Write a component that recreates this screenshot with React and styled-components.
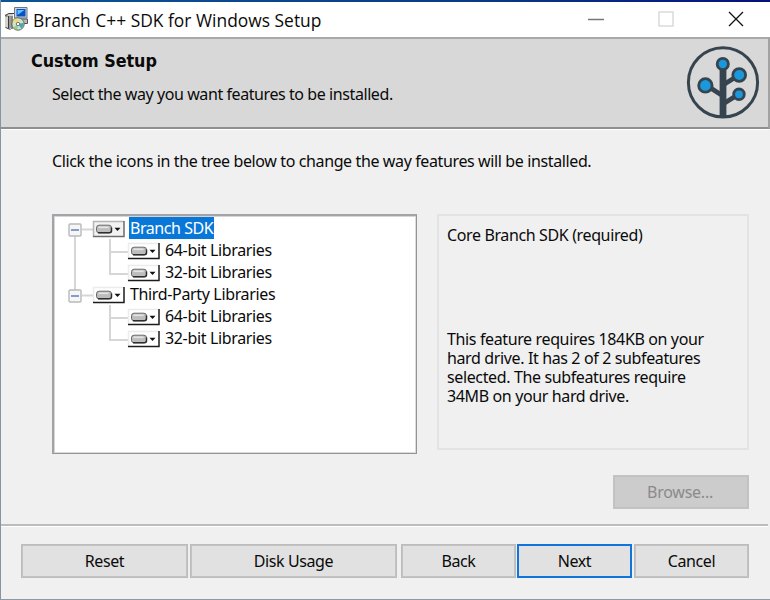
import React from 'react';
import styled, { createGlobalStyle } from 'styled-components';

const Global = createGlobalStyle`
  * { box-sizing: border-box; }
  body { margin: 0; background: #f0f0f0; }
`;

const Window = styled.div`
  width: 770px;
  height: 600px;
  display: flex;
  flex-direction: column;
  background: #f0f0f0;
  border-left: 1px solid #8795a1;
  border-bottom: 1px solid #8c9aa5;
  font: 16px/19px 'Noto Sans', 'Open Sans', sans-serif;
  letter-spacing: -0.4px;
  color: #0a0a0a;
  overflow: hidden;
  white-space: nowrap;
`;

const TitleBar = styled.header`
  height: 37px;
  flex: none;
  display: flex;
  align-items: center;
  padding-left: 3px;
  background: linear-gradient(90deg, #0b5597, #0a3b86 60%, #04107c) 0 0 / 100% 2px no-repeat, #fff;
`;

const WindowTitle = styled.h1`
  flex: 1;
  margin: 2px 0 0 3px;
  font: 400 17.4px/24px 'Open Sans', 'Noto Sans', sans-serif;
  letter-spacing: 0.01px;
`;

const WindowControls = styled.div`
  display: flex;
  align-items: center;
  gap: 54px;
  padding: 1px 26px 0 0;
  svg { display: block; }
`;

const Banner = styled.section`
  height: 92px;
  flex: none;
  display: flex;
  justify-content: space-between;
  background: #d8d8d8;
  border-top: 2px solid #a9a9a9;
  border-right: 2px solid #a2a2a2;
  border-bottom: 2px solid #8f8f8f;
  box-shadow: 0 1px 0 #fff;
  padding: 0 8px 0 30px;
`;

const BannerTitle = styled.h2`
  margin: 11px 0 0;
  font: 700 17.8px/22px 'DejaVu Sans Condensed', 'DejaVu Sans', sans-serif;
  letter-spacing: -0.05px;
`;

const BannerText = styled.p`
  margin: 13px 0 0 21px;
  letter-spacing: -0.42px;
`;

const Logo = styled.svg`
  display: block;
  margin-top: 6px;
`;

const Body = styled.main`
  height: 395px;
  flex: none;
  padding: 23px 21px 0 51px;
`;

const Instruction = styled.p`
  margin: 0;
  letter-spacing: -0.38px;
`;

const Columns = styled.div`
  display: flex;
  justify-content: space-between;
  margin-top: 43px;
  height: 240px;
`;

const Tree = styled.ul`
  width: 365px;
  margin: 0;
  padding: 1px 0 0 14px;
  list-style: none;
  background: #fff;
  border: 2px solid #a2a4a7;
  border-right: 1px solid #929498;
  border-bottom: 1px solid #929498;
  box-shadow: inset 1px 1px 0 #d5d5d5, inset -1px -1px 0 #dcdcdc;
`;

const TreeRow = styled.li`
  display: flex;
  height: 22px;
`;

const Label = styled.span`
  height: 22px;
  line-height: 22px;
  padding: 0 1px 0 1px;
  margin-left: 3px;
  color: ${(p) => (p.$selected ? '#fff' : '#0a0a0a')};
  background: ${(p) => (p.$selected ? '#0877d8' : 'none')};
  letter-spacing: ${(p) => (p.$selected ? -0.45 : -0.35)}px;
`;

const Details = styled.aside`
  width: 312px;
  height: 236px;
  border: 2px solid #e3e3e3;
  padding: 10px 0 0 8px;
`;

const DetailText = styled.p`
  width: 262px;
  margin: 0 0 85px;
  line-height: 19px;
  letter-spacing: -0.37px;
  white-space: normal;
`;

const BrowseRow = styled.div`
  display: flex;
  justify-content: flex-end;
  margin-top: 21px;
`;

const Button = styled.button`
  width: ${(p) => p.$width}px;
  height: 34px;
  margin: 0 0 0 ${(p) => p.$gap || 0}px;
  padding: 1px 0 0;
  font: inherit;
  letter-spacing: inherit;
  color: #0a0a0a;
  background: #e1e1e1;
  border: ${(p) => (p.$primary ? '2px solid #0f74dc' : '1px solid #bcbcbc')};
  box-shadow: ${(p) => (p.$primary ? 'none' : 'inset 0 0 0 1px #c3c3c3')};
  &:disabled {
    color: #8a8a8a;
    letter-spacing: -0.25px;
    padding-right: 2px;
    background: #ccc;
    border-color: #c4c4c4;
    box-shadow: inset 0 0 0 1px #c0c0c0;
  }
`;

const Footer = styled.footer`
  flex: 1;
  display: flex;
  align-items: flex-start;
  padding: 18px 0 0 20px;
  border-top: 2px solid #bcbcbc;
  margin-right: 2px;
  box-shadow: inset 0 1px 0 #fff;
`;

function InstallerIcon() {
  return (
    <svg width="26" height="26" viewBox="0 0 26 26">
      <path d="M1 9l3-1.5h5v15.5H5l-4-1.5z" fill="#d2d2cc" />
      <path d="M1 9.5l4-2h5M4.5 10v12.5M8 10v13M1.5 21.5l5 2M1.5 10h2" stroke="#3c3c3c" fill="none" />
      <path d="M6 10v12" stroke="#8a8a84" strokeWidth="1.5" />
      <path d="M10.5 1.5h12.5v10.5H10.5z" fill="#c9d3df" stroke="#6d7784" />
      <path d="M12.5 3h9v7.5h-9z" fill="#0a50c4" />
      <path d="M13.5 4h7l-7 5z" fill="#52c4ff" />
      <path d="M14 13h9.5v4.5h-5z" fill="#b9b9b5" stroke="#555" />
      <circle cx="14" cy="18" r="6.2" fill="#d3e2cd" stroke="#5d665c" />
      <path d="M14 18l-5-3.5a6 6 0 0 1 5-2z" fill="#f0dc68" />
      <path d="M14 18l-4.5 3.5a6 6 0 0 0 4 2z" fill="#8fd08e" />
      <path d="M14 18l5.6-1.2a6 6 0 0 1-2.5 5.6z" fill="#3fabb4" />
      <circle cx="14" cy="18" r="1.7" fill="#fff" stroke="#777" />
    </svg>
  );
}

function BranchLogo() {
  return (
    <Logo width="74" height="74" viewBox="0 0 74 74">
      <g fill="none" stroke="#36444f">
        <circle cx="37" cy="37.4" r="34.6" strokeWidth="3" />
        <path d="M37 71V20" strokeWidth="6.8" />
        <path d="M20 40l17 11M53 30L37 40M53 49L37 59" strokeWidth="4.8" />
      </g>
      <g fill="#1b98dc" stroke="#36444f" strokeWidth="2.8">
        <circle cx="36.8" cy="19" r="5.6" />
        <circle cx="53.2" cy="30" r="6.4" />
        <circle cx="19.4" cy="40.4" r="6.7" />
        <circle cx="53" cy="49.3" r="5.3" />
      </g>
    </Logo>
  );
}

// Connector lines, expander box and drive button of one tree row.
function Branch({ child, first, last, selected, outer }) {
  const x = child ? 60 : 25;
  const width = x + 33;
  return (
    <svg width={width} height="22" viewBox={`0 0 ${width} 22`}>
      <g fill="none" stroke="#d6d6d6" strokeWidth="2">
        {child ? (
          <path d={last ? 'M42 0V13H60' : 'M42 0V22M42 13H60'} />
        ) : (
          <path d="M14 12.5H26" />
        )}
        {outer && <path d="M7 0V22" />}
        {!child && <path d={first ? 'M7 18V22' : 'M7 0V7'} />}
      </g>
      {!child && (
        <>
          <rect x="1" y="7" width="12" height="12" rx="1" fill="#f6f6f6" stroke="#b9b9b9" strokeWidth="1.4" />
          <path d="M3 13h8" stroke="#5f7cbc" strokeWidth="1.5" />
        </>
      )}
      <rect x={x} y="4" width="31" height="15" fill={selected ? '#f2f2f2' : '#fff'} />
      <path d={`M${x + 0.5} 20V4.5H${x + 31}`} stroke={selected ? '#b5b5b5' : '#ececec'} fill="none" strokeWidth="1.5" />
      <path d={`M${x} 19.5H${x + 31}V4`} stroke={selected ? '#6c6c6c' : '#1c1c1c'} fill="none" strokeWidth="1.5" />
      <rect x={x + 3.5} y="8.2" width="15" height="7.6" rx="2.6" fill="#bdbdbd" stroke="#6a6a6a" />
      <path d={`M${x + 5.5} 10.3h10`} stroke="#e4e4e4" strokeWidth="1.6" />
      <path d={`M${x + 5} 15.7h11.5q2 0 2-2V10.5`} stroke="#2e2e2e" fill="none" strokeWidth="1.5" />
      <path d={`M${x + 21.5} 10.8h6l-3 3.2z`} fill="#111" />
    </svg>
  );
}

const rows = [
  { label: 'Branch SDK', first: true, selected: true },
  { label: '64-bit Libraries', child: true, outer: true },
  { label: '32-bit Libraries', child: true, last: true, outer: true },
  { label: 'Third-Party Libraries' },
  { label: '64-bit Libraries', child: true },
  { label: '32-bit Libraries', child: true, last: true },
];

export default function App() {
  return (
    <Window>
      <Global />
      <TitleBar>
        <InstallerIcon />
        <WindowTitle>Branch C++ SDK for Windows Setup</WindowTitle>
        <WindowControls>
          <svg width="16" height="16"><path d="M0 8.5h16" stroke="#777" strokeWidth="1.5" /></svg>
          <svg width="16" height="16"><rect x="1" y="1" width="14" height="14" fill="none" stroke="#d5d5d5" strokeWidth="1.3" /></svg>
          <svg width="16" height="16"><path d="M1 1l14 14M15 1L1 15" stroke="#111" strokeWidth="1.3" /></svg>
        </WindowControls>
      </TitleBar>
      <Banner>
        <div>
          <BannerTitle>Custom Setup</BannerTitle>
          <BannerText>Select the way you want features to be installed.</BannerText>
        </div>
        <BranchLogo />
      </Banner>
      <Body>
        <Instruction>Click the icons in the tree below to change the way features will be installed.</Instruction>
        <Columns>
          <Tree>
            {rows.map((r, i) => (
              <TreeRow key={i}>
                <Branch {...r} />
                <Label $selected={r.selected}>{r.label}</Label>
              </TreeRow>
            ))}
          </Tree>
          <Details>
            <DetailText>Core Branch SDK (required)</DetailText>
            <DetailText>
              This feature requires 184KB on your hard drive. It has 2 of 2 subfeatures
              selected. The subfeatures require 34MB on your hard drive.
            </DetailText>
          </Details>
        </Columns>
        <BrowseRow><Button $width={136} disabled>Browse...</Button></BrowseRow>
      </Body>
      <Footer>
        <Button $width={167}>Reset</Button>
        <Button $width={207} $gap={2}>Disk Usage</Button>
        <Button $width={115} $gap={4}>Back</Button>
        <Button $width={115} $gap={1} $primary>Next</Button>
        <Button $width={115} $gap={2}>Cancel</Button>
      </Footer>
    </Window>
  );
}
